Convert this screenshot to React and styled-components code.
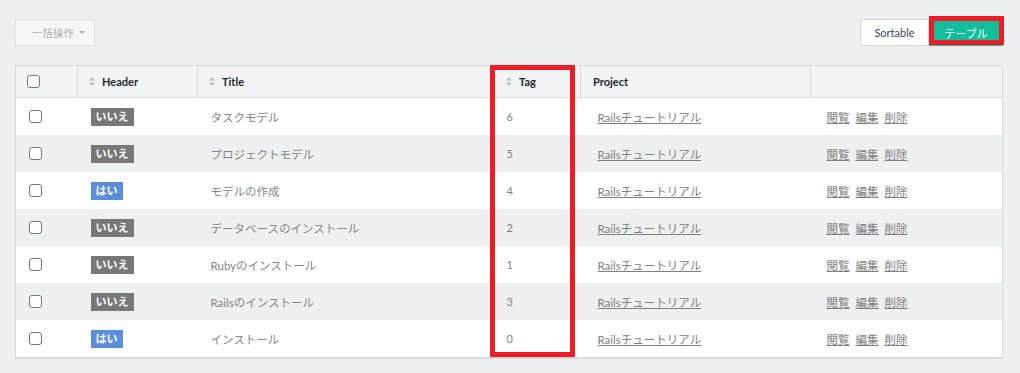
import React from "react";
import styled, { createGlobalStyle } from "styled-components";

const GlobalStyle = createGlobalStyle`
  body {
    margin: 0;
    background: #ecf0f1;
    font-family: Lato, "Noto Sans CJK JP", sans-serif;
    color: #777;
  }
`;

const Page = styled.div`
  padding: 19px 17px 16px 15px;
`;

const Toolbar = styled.div`
  display: flex;
  justify-content: space-between;
  align-items: center;
  height: 27px;
  margin-bottom: 19px;
`;

const BulkButton = styled.button`
  display: flex;
  align-items: center;
  gap: 5px;
  box-sizing: border-box;
  width: 80px;
  height: 27px;
  padding: 0 0 0 16px;
  background: #f4f6f7;
  border: 1px solid #dde2e4;
  color: #adb1b3;
  font-family: inherit;
  font-size: 10.5px;
  cursor: default;
`;

const Caret = styled.span`
  width: 0;
  height: 0;
  border-left: 3px solid transparent;
  border-right: 3px solid transparent;
  border-top: 3px solid #adb1b3;
`;

const ToggleGroup = styled.div`
  display: flex;
`;

const ToggleButton = styled.button`
  position: relative;
  box-sizing: border-box;
  width: ${(p) => p.$width}px;
  height: 27px;
  padding: 0;
  font-family: inherit;
  font-size: 11px;
  border: 1px solid ${(p) => (p.$active ? "#12bd9c" : "#d5dbdd")};
  background: ${(p) => (p.$active ? "#12bd9c" : "#fff")};
  color: ${(p) => (p.$active ? "#fff" : "#34495e")};
  ${(p) =>
    p.$marked &&
    `
    &::after {
      content: "";
      position: absolute;
      left: -1px;
      right: -2px;
      top: -4px;
      bottom: 0;
      border: 5px solid #ee1c25;
    }
  `}
`;

const TableWrap = styled.div`
  position: relative;
`;

const Table = styled.table`
  width: 988px;
  table-layout: fixed;
  border-collapse: collapse;
  background: #fff;
  border: 1px solid #d5dbdd;
  border-bottom-width: 2px;
`;

const HeadCell = styled.th`
  height: 31px;
  padding: 0 0 0 ${(p) => p.$pad ?? 11}px;
  text-align: left;
  background: #f1f4f5;
  border-bottom: 1px solid #d5dbdd;
  border-right: 1px solid #d5dbdd;
  color: #1c2833;
  font-size: 11px;
  font-weight: 700;
  &:last-child {
    border-right: none;
  }
`;

const HeadLabel = styled.span`
  display: inline-flex;
  align-items: center;
  gap: 7px;
`;

const Row = styled.tr`
  background: ${(p) => (p.$even ? "#ecf0f1" : "#fff")};
`;

const Cell = styled.td`
  height: 37px;
  padding: 0 0 0 ${(p) => p.$pad ?? 13}px;
  font-size: 11.5px;
  color: #858585;
  white-space: nowrap;
`;

const Check = styled.input.attrs({ type: "checkbox" })`
  appearance: none;
  display: block;
  box-sizing: border-box;
  width: 13px;
  height: 13px;
  margin: 0;
  border: 1px solid #767676;
  border-radius: 3px;
  background: #fff;
`;

const Badge = styled.span`
  display: inline-block;
  padding: 0 5px;
  height: 18px;
  line-height: 18px;
  font-size: 11px;
  font-weight: 700;
  color: #fff;
  background: ${(p) => (p.$yes ? "#5a8edb" : "#777")};
`;

const Link = styled.a`
  color: #808080;
  text-decoration: underline;
  margin-right: ${(p) => p.$gap ?? 0}px;
`;

const TagNum = styled.span`
  font-size: 11px;
  color: #8b8079;
`;

const ColumnMark = styled.div`
  position: absolute;
  left: 475px;
  top: 0;
  width: 85px;
  height: 292px;
  box-sizing: border-box;
  border: 5px solid #ee1c25;
  pointer-events: none;
`;

const SortIcon = () => (
  <svg width="6" height="9" viewBox="0 0 6 9">
    <path d="M3 0 L6 3.5 H0 Z" fill="#bcc3c7" />
    <path d="M3 9 L6 5.5 H0 Z" fill="#bcc3c7" />
  </svg>
);

const rows = [
  { yes: false, title: "タスクモデル", tag: 6 },
  { yes: false, title: "プロジェクトモデル", tag: 5 },
  { yes: true, title: "モデルの作成", tag: 4 },
  { yes: false, title: "データベースのインストール", tag: 2 },
  { yes: false, title: "Rubyのインストール", tag: 1 },
  { yes: false, title: "Railsのインストール", tag: 3 },
  { yes: true, title: "インストール", tag: 0 },
];

export default function App() {
  return (
    <Page>
      <GlobalStyle />
      <Toolbar>
        <BulkButton>
          一括操作
          <Caret />
        </BulkButton>
        <ToggleGroup>
          <ToggleButton $width={69}>Sortable</ToggleButton>
          <ToggleButton $width={74} $active $marked>
            テーブル
          </ToggleButton>
        </ToggleGroup>
      </Toolbar>
      <TableWrap>
        <Table>
          <colgroup>
            <col style={{ width: 62 }} />
            <col style={{ width: 120 }} />
            <col style={{ width: 297 }} />
            <col style={{ width: 86 }} />
            <col style={{ width: 230 }} />
            <col />
          </colgroup>
          <thead>
            <tr>
              <HeadCell>
                <Check />
              </HeadCell>
              <HeadCell>
                <HeadLabel>
                  <SortIcon />
                  Header
                </HeadLabel>
              </HeadCell>
              <HeadCell>
                <HeadLabel>
                  <SortIcon />
                  Title
                </HeadLabel>
              </HeadCell>
              <HeadCell>
                <HeadLabel>
                  <SortIcon />
                  Tag
                </HeadLabel>
              </HeadCell>
              <HeadCell $pad={12}>Project</HeadCell>
              <HeadCell />
            </tr>
          </thead>
          <tbody>
            {rows.map((r, i) => (
              <Row key={i} $even={i % 2 === 1}>
                <Cell>
                  <Check />
                </Cell>
                <Cell>
                  <Badge $yes={r.yes}>{r.yes ? "はい" : "いいえ"}</Badge>
                </Cell>
                <Cell>{r.title}</Cell>
                <Cell $pad={12}>
                  <TagNum>{r.tag}</TagNum>
                </Cell>
                <Cell $pad={17}>
                  <Link href="#">Railsチュートリアル</Link>
                </Cell>
                <Cell $pad={16}>
                  <Link href="#" $gap={6}>閲覧</Link>
                  <Link href="#" $gap={6}>編集</Link>
                  <Link href="#">削除</Link>
                </Cell>
              </Row>
            ))}
          </tbody>
        </Table>
        <ColumnMark />
      </TableWrap>
    </Page>
  );
}
